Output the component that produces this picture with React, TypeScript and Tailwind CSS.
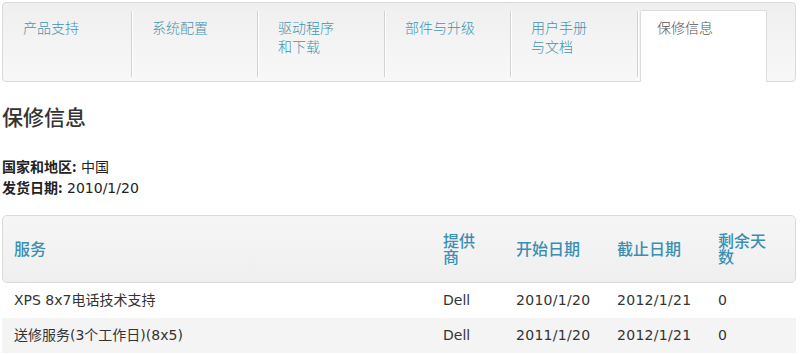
import React from "react";

const tabs = [
  { label: ["产品支持"], w: "w-[129px]" },
  { label: ["系统配置"], w: "w-[126px]" },
  { label: ["驱动程序", "和下载"], w: "w-[127px]" },
  { label: ["部件与升级"], w: "w-[126px]" },
  { label: ["用户手册", "与文档"], w: "w-[127px]" },
];

const rows = [
  { s: "XPS 8x7电话技术支持", p: "Dell", a: "2010/1/20", b: "2012/1/21", d: "0" },
  { s: "送修服务(3个工作日)(8x5)", p: "Dell", a: "2011/1/20", b: "2012/1/21", d: "0" },
];

const font = { fontFamily: '"DejaVu Sans", "Noto Sans CJK SC", sans-serif' };

export default function App() {
  return (
    <div className="w-[806px] h-[354px] bg-white overflow-hidden text-[#333]" style={font}>
      <div className="ml-[2px] mt-[2px] w-[794px] h-[80px] border border-[#d9d9d9] rounded-[4px] bg-gradient-to-b from-[#efefef] to-[#f8f8f8] flex pt-[7px]">
        {tabs.map((t, i) => (
          <div key={i} className={`${t.w} my-[1px] mb-[4px] border-r border-[#d2d2d2] shadow-[1px_0_0_#ffffff] pl-[20px] pt-[7px] text-[14px] leading-[19px] text-[#4394ae]`} style={{ fontFamily: '"Noto Sans CJK SC", sans-serif', fontWeight: 300 }}>
            {t.label.map((l, j) => (
              <div key={j}>{l}</div>
            ))}
          </div>
        ))}
        <div className="ml-[2px] w-[127px] -mb-px bg-white border border-b-0 border-[#dcdcdc] rounded-t-[2px] pl-[16px] pt-[7px] text-[14px] leading-[19px] text-[#555]" style={{ fontFamily: '"Noto Sans CJK SC", sans-serif', fontWeight: 300 }}>
          保修信息
        </div>
      </div>

      <div className="pl-[2px] mt-[19px] text-[21px] leading-[30px] text-[#333]" style={{ fontFamily: '"Noto Sans CJK SC", sans-serif', fontWeight: 500 }}>
        保修信息
      </div>

      <div className="pl-[2px] mt-[25px] text-[14px] leading-[20px] text-[#222]">
        <div>
          <span className="font-bold" style={{ fontFamily: '"Noto Sans CJK SC", sans-serif' }}>国家和地区:</span> 中国
        </div>
        <div>
          <span className="font-bold" style={{ fontFamily: '"Noto Sans CJK SC", sans-serif' }}>发货日期:</span> 2010/1/20
        </div>
      </div>

      <div className="ml-[2px] mt-[17px] w-[794px]">
        <div className="h-[68px] pb-[2px] border border-[#dadada] rounded-[5px] bg-gradient-to-b from-[#f6f6f6] to-[#efefef] grid grid-cols-[428px_73px_101px_101px_1fr] items-center text-[16px] leading-[16px] text-[#3b8fb3]" style={{ fontFamily: '"Noto Sans CJK SC", sans-serif', fontWeight: 500 }}>
          <div className="pl-[11px]">服务</div>
          <div className="pl-[12px]"><div className="w-[36px]">提供商</div></div>
          <div className="pl-[12px]">开始日期</div>
          <div className="pl-[12px]">截止日期</div>
          <div className="pl-[12px]"><div className="w-[52px]">剩余天数</div></div>
        </div>
        {rows.map((r, i) => (
          <div key={i} className={`h-[35px] grid grid-cols-[428px_73px_101px_101px_1fr] items-center text-[14px] text-[#333] ${i % 2 === 1 ? "bg-[#f4f4f4]" : "bg-white"}`}>
            <div className="pl-[12px]">{r.s}</div>
            <div className="pl-[13px]">{r.p}</div>
            <div className="pl-[13px] tracking-[0.3px]">{r.a}</div>
            <div className="pl-[13px] tracking-[0.3px]">{r.b}</div>
            <div className="pl-[13px]">{r.d}</div>
          </div>
        ))}
      </div>
    </div>
  );
}
